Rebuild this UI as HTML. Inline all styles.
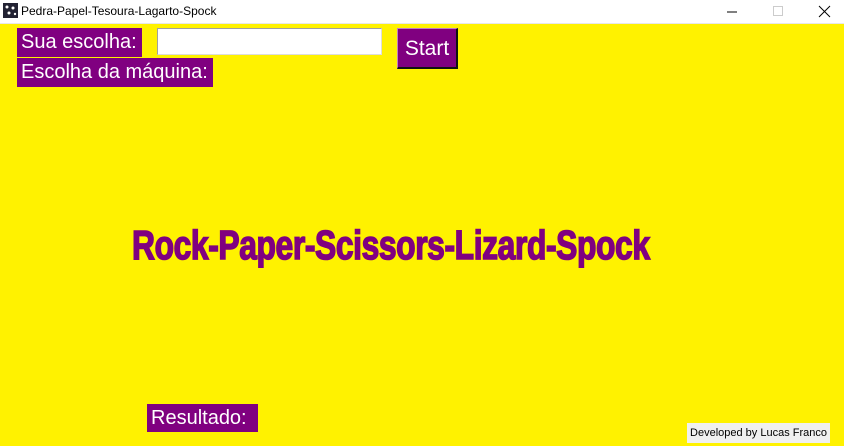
<!DOCTYPE html>
<html><head><style>
body{margin:0;width:844px;height:446px;overflow:hidden;background:#fff200;font-family:"Liberation Sans",sans-serif;position:relative}
.t{position:absolute;left:0;top:0;width:844px;height:23px;background:#fff;border-bottom:1px solid #e8e8e8}
.t span{position:absolute;left:21px;top:4px;font-size:12px;color:#000}
.lab{position:absolute;background:#800080;color:#fff;font-size:20px;line-height:29px;padding-left:4px;box-sizing:border-box;white-space:nowrap}
.e{position:absolute;left:157px;top:28px;width:225px;height:27px;background:#fff;border:1px solid #a0a0a0;border-right-color:#ddd;border-bottom-color:#ddd;box-sizing:border-box}
.b{position:absolute;left:397px;top:28px;width:61px;height:41px;background:#800080;color:#fff;font-size:21px;text-align:center;line-height:40px;border:1px solid #333;border-top-color:#c080c0;border-left-color:#c080c0;border-right:2px solid #111;border-bottom:2px solid #111;box-sizing:border-box}
.big{position:absolute;left:132px;top:222px;font-family:"Liberation Sans Narrow","Liberation Sans",sans-serif;font-weight:bold;font-size:41px;color:#800080;-webkit-text-stroke:1.6px #800080;transform-origin:0 0;white-space:nowrap;letter-spacing:-0.5px}
.d{position:absolute;left:687px;top:423px;width:143px;height:20px;background:#f0f0f0;font-size:11px;line-height:20px;text-align:center;color:#000}
</style></head><body>
<div class="t"><svg style="position:absolute;left:3px;top:3px" width="15" height="15"><rect width="15" height="15" fill="#223"/><circle cx="4" cy="4" r="1.5" fill="#fff"/><circle cx="10" cy="5" r="1.5" fill="#fff"/><circle cx="6" cy="10" r="1.5" fill="#fff"/><circle cx="12" cy="11" r="1.2" fill="#fff"/></svg><span>Pedra-Papel-Tesoura-Lagarto-Spock</span>
<svg style="position:absolute;left:727px;top:5px" width="110" height="14"><line x1="0" y1="7" x2="10" y2="7" stroke="#000"/><rect x="46.5" y="1.5" width="9" height="9" fill="none" stroke="#ccc"/><line x1="92" y1="1" x2="103" y2="12" stroke="#000"/><line x1="103" y1="1" x2="92" y2="12" stroke="#000"/></svg></div>
<div class="lab" style="left:17px;top:28px;width:125px;height:29px">Sua escolha:</div>
<div class="e"></div>
<div class="b">Start</div>
<div class="lab" style="left:17px;top:58px;width:196px;height:29px">Escolha da máquina:</div>
<div class="big" id="big">Rock-Paper-Scissors-Lizard-Spock</div>
<div class="lab" style="left:147px;top:404px;width:111px;height:28px;line-height:28px">Resultado:</div>
<div class="d">Developed by Lucas Franco</div>
<script>var e=document.getElementById('big');e.style.transform='scaleX('+(518/e.offsetWidth)+')';</script>
</body></html>
